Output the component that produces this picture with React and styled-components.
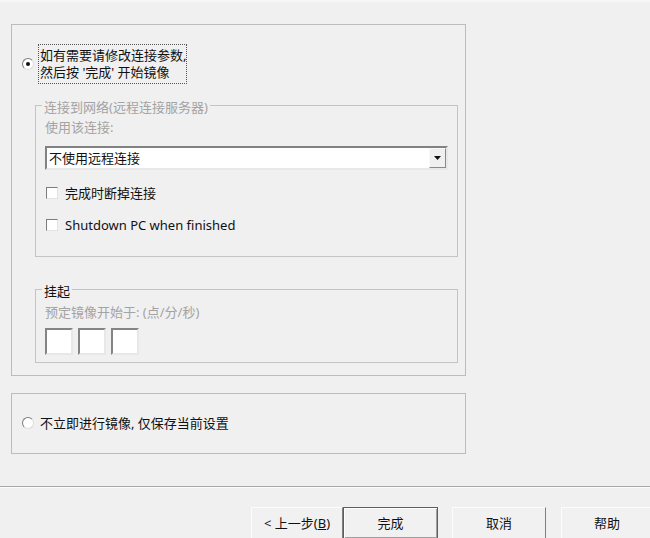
import React from "react";
import styled, { createGlobalStyle } from "styled-components";

const GlobalStyle = createGlobalStyle`
  html, body {
    margin: 0;
    padding: 0;
    background: #f0f0f0;
  }
  body {
    font-family: "Noto Sans", "Noto Sans CJK SC", sans-serif;
    font-size: 13px;
    color: #111;
  }
`;

// CSS
const Page = styled.div`
  width: 650px;
  height: 538px;
  overflow: hidden;
  display: flex;
  flex-direction: column;
  background: #f0f0f0;
  border-top: 2px solid #f6f6f6;
  box-sizing: border-box;
`;

const Body = styled.div`
  flex: 1;
  display: flex;
  flex-direction: column;
  padding: 22px 0 0 11px;
`;

const OptionBox = styled.div`
  box-sizing: border-box;
  width: 455px;
  height: ${p => p.$height}px;
  margin-top: ${p => p.$top || 0}px;
  border: 1px solid #bcbcbc;
  padding: ${p => p.$pad};
  display: flex;
  flex-direction: column;
`;

const RadioRow = styled.label`
  display: flex;
  align-items: center;
  gap: ${p => (p.$focused ? 4 : 6)}px;
`;

const RadioMark = styled.span`
  box-sizing: border-box;
  width: 12px;
  height: 12px;
  border-radius: 50%;
  border: 1px solid;
  border-color: #7a7a7a #dcdcdc #dcdcdc #7a7a7a;
  background: #fff;
  display: flex;
  align-items: center;
  justify-content: center;
  flex: none;
`;

const RadioDot = styled.span`
  width: 4px;
  height: 4px;
  border-radius: 50%;
  background: #111;
`;

const FocusText = styled.span`
  border: 1px dotted #555;
  padding: 2px 0 2px 1px;
  line-height: 17px;
`;

const Group = styled.fieldset`
  box-sizing: border-box;
  width: 423px;
  margin: ${p => p.$top}px 0 0 13px;
  border: 1px solid #c4c4c4;
  padding: 0 9px ${p => p.$bottom}px 9px;
  display: flex;
  flex-direction: column;
  min-width: 0;
`;

const Caption = styled.legend`
  margin-left: -3px;
  padding: 3px 2px 0;
  line-height: 16px;
  color: ${p => (p.$disabled ? "#a3a3a3" : "#111")};
`;

const Hint = styled.div`
  line-height: 16px;
  color: #a3a3a3;
  margin-top: ${p => p.$top}px;
`;

const Combo = styled.div`
  box-sizing: border-box;
  margin-top: 11px;
  width: 403px;
  height: 24px;
  display: flex;
  background: #fff;
  border: 2px solid;
  border-color: #828282 #e8e8e8 #e8e8e8 #828282;
`;

const ComboValue = styled.span`
  flex: 1;
  padding-left: 2px;
  line-height: 20px;
`;

const ComboButton = styled.span`
  box-sizing: border-box;
  width: 17px;
  height: 20px;
  background: #f0f0f0;
  border: 1px solid;
  border-color: #fafafa #8a8a8a #8a8a8a #fafafa;
  display: flex;
  align-items: center;
  justify-content: center;
`;

const CheckRow = styled.label`
  display: flex;
  align-items: center;
  gap: 7px;
  line-height: 16px;
  margin-top: ${p => p.$top}px;
`;

const CheckMark = styled.span`
  box-sizing: border-box;
  width: 12px;
  height: 12px;
  margin-left: 1px;
  background: #fff;
  border: 1px solid;
  border-color: #7d7d7d #e4e4e4 #e4e4e4 #7d7d7d;
`;

const TimeRow = styled.div`
  display: flex;
  gap: 5px;
  margin-top: 8px;
`;

const TimeField = styled.span`
  box-sizing: border-box;
  width: 28px;
  height: 27px;
  background: #fff;
  border: 2px solid;
  border-color: #848484 #e8e8e8 #e8e8e8 #848484;
`;

const Separator = styled.div`
  height: 1px;
  background: #a8a8a8;
  border-bottom: 1px solid #fbfbfb;
`;

const ButtonBar = styled.div`
  display: flex;
  padding: 19px 0 0 251px;
  height: 31px;
`;

const Button = styled.div`
  box-sizing: border-box;
  width: ${p => p.$width}px;
  height: 32px;
  margin-left: ${p => p.$gap || 0}px;
  flex: none;
  display: flex;
  justify-content: center;
  padding-top: 7px;
  line-height: 16px;
  background: #f1f1f1;
  border: 1px solid;
  border-color: ${p =>
    p.$default ? "#5e5e5e" : "#fcfcfc #7e7e7e #7e7e7e #fcfcfc"};
  box-shadow: ${p =>
    p.$default ? "inset 1px 1px #fdfdfd, inset -1px -1px #a0a0a0" : "none"};
`;

export default function App() {
  return (
    <Page>
      <GlobalStyle />
      <Body>
        <OptionBox $height={352} $pad="19px 0 0 10px">
          <RadioRow $focused>
            <RadioMark>
              <RadioDot />
            </RadioMark>
            <FocusText>
              如有需要请修改连接参数,
              <br />
              然后按 '完成' 开始镜像
            </FocusText>
          </RadioRow>

          <Group $top={12} $bottom={23}>
            <Caption $disabled>连接到网络(远程连接服务器)</Caption>
            <Hint $top={4}>使用该连接:</Hint>
            <Combo>
              <ComboValue>不使用远程连接</ComboValue>
              <ComboButton>
                <svg width="7" height="4" viewBox="0 0 7 4">
                  <path d="M0 0h7L3.5 4z" fill="#111" />
                </svg>
              </ComboButton>
            </Combo>
            <CheckRow $top={15}>
              <CheckMark />
              完成时断掉连接
            </CheckRow>
            <CheckRow $top={16}>
              <CheckMark />
              Shutdown PC when finished
            </CheckRow>
          </Group>

          <Group $top={23} $bottom={7}>
            <Caption>挂起</Caption>
            <Hint $top={5}>预定镜像开始于: (点/分/秒)</Hint>
            <TimeRow>
              <TimeField />
              <TimeField />
              <TimeField />
            </TimeRow>
          </Group>
        </OptionBox>

        <OptionBox $height={61} $top={17} $pad="19px 0 0 10px">
          <RadioRow>
            <RadioMark />
            不立即进行镜像, 仅保存当前设置
          </RadioRow>
        </OptionBox>
      </Body>

      <Separator />
      <ButtonBar>
        <Button $width={92}>
          &lt; 上一步(<u>B</u>)
        </Button>
        <Button $width={95} $default>
          完成
        </Button>
        <Button $width={94} $gap={14}>
          取消
        </Button>
        <Button $width={92} $gap={15}>
          帮助
        </Button>
      </ButtonBar>
    </Page>
  );
}
